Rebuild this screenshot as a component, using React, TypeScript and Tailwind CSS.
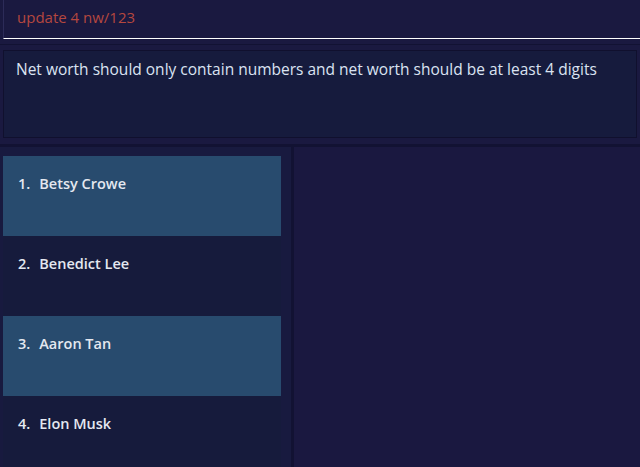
const persons = [
  { id: 1, name: "Betsy Crowe" },
  { id: 2, name: "Benedict Lee" },
  { id: 3, name: "Aaron Tan" },
  { id: 4, name: "Elon Musk" },
];

function PersonCard({ index, name }: { index: number; name: string }) {
  const odd = index % 2 === 1;
  return (
    <div
      className={`h-[80px] shrink-0 pl-[15px] pt-[17px] text-[14.5px] font-semibold text-[#e4e8f0] ${
        odd ? "bg-[#284b6e]" : "bg-[#161b3c]"
      }`}
    >
      <span>{index}.</span>
      <span className="ml-[9px]">{name}</span>
    </div>
  );
}

export default function App() {
  return (
    <div
      className="flex h-[467px] w-[640px] flex-col overflow-hidden bg-[#1a1940]"
      style={{ fontFamily: '"Open Sans", "Noto Sans", sans-serif' }}
    >
      {/* command box */}
      <div className="h-[39px] shrink-0 pl-[3px]">
        <div className="h-full border-b border-l border-b-white border-l-[#2c2b58] pl-[13px] pt-[6px] text-[15px] text-[#b5473f]">
          update 4 nw/123
        </div>
      </div>

      <div className="h-[6px] shrink-0 border-b border-[#121233]" />

      {/* result display */}
      <div className="shrink-0 px-[3px] pt-[5px] pb-[6px]">
        <div className="h-[88px] border border-[#10102e] bg-[#161b3d] pl-[12px] pt-[7px] text-[15.5px] text-[#dbe3f2]">
          Net worth should only contain numbers and net worth should be at least 4 digits
        </div>
      </div>

      <div className="h-[3px] shrink-0 bg-[#121233]" />

      {/* list + detail */}
      <div className="flex min-h-0 flex-1">
        <div className="flex w-[291px] shrink-0 flex-col bg-[#181a3f] pl-[3px] pr-[10px] pt-[9px]">
          {persons.map((p) => (
            <PersonCard key={p.id} index={p.id} name={p.name} />
          ))}
        </div>
        <div className="w-[3px] shrink-0 bg-[#121233]" />
        <div className="flex-1 bg-[#1a1840]" />
      </div>
    </div>
  );
}
